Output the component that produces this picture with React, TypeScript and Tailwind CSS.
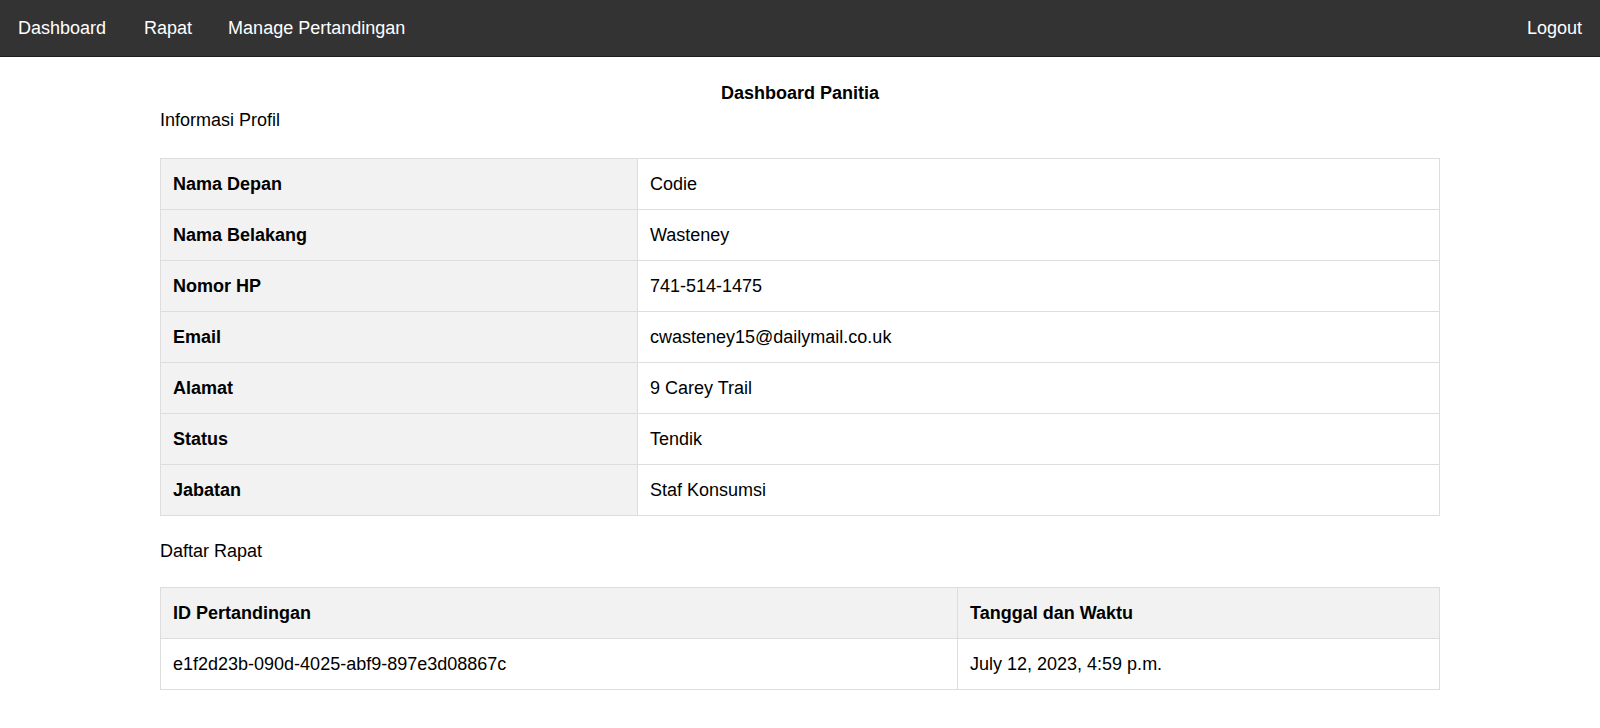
const profil = [
    ["Nama Depan", "Codie"],
    ["Nama Belakang", "Wasteney"],
    ["Nomor HP", "741-514-1475"],
    ["Email", "cwasteney15@dailymail.co.uk"],
    ["Alamat", "9 Carey Trail"],
    ["Status", "Tendik"],
    ["Jabatan", "Staf Konsumsi"],
];

const rapat = [
    { id: "e1f2d23b-090d-4025-abf9-897e3d08867c", waktu: "July 12, 2023, 4:59 p.m." },
];

const Navbar = () => {
    return (
        <nav className="flex h-[57px] items-center justify-between bg-[#333] border-b border-[#1c1c1c] text-white text-[18px]">
            <div className="flex">
                <a className="pl-[18px] pr-[19px] cursor-pointer">Dashboard</a>
                <a className="pl-[19px] pr-[18px] cursor-pointer">Rapat</a>
                <a className="px-[18px] cursor-pointer">Manage Pertandingan</a>
            </div>
            <a className="px-[18px] cursor-pointer">Logout</a>
        </nav>
    );
}

export default function App() {
    return (
        <div className="min-h-screen bg-white text-black text-[18px]" style={{ fontFamily: '"Liberation Sans", Arial, sans-serif' }}>
            <Navbar />

            <div className="mx-auto w-[1280px]">
                <h2 className="mt-[26px] text-center font-bold leading-[20px]">Dashboard Panitia</h2>
                <p className="mt-[7px] leading-[20px]">Informasi Profil</p>

                <table className="mt-[28px] w-full border-collapse">
                    <tbody>
                        {profil.map(([label, value]) => (
                            <tr key={label}>
                                <th className="w-[477px] border border-[#ddd] bg-[#f2f2f2] px-3 py-[15px] text-left font-bold leading-[20px]">{label}</th>
                                <td className="border border-[#ddd] px-3 py-[15px] leading-[20px]">{value}</td>
                            </tr>
                        ))}
                    </tbody>
                </table>

                <p className="mt-[25px] leading-[20px]">Daftar Rapat</p>

                <table className="mt-[26px] w-full border-collapse">
                    <thead>
                        <tr className="bg-[#f2f2f2]">
                            <th className="w-[797px] border border-[#ddd] px-3 py-[15px] text-left font-bold leading-[20px]">ID Pertandingan</th>
                            <th className="border border-[#ddd] px-3 py-[15px] text-left font-bold leading-[20px]">Tanggal dan Waktu</th>
                        </tr>
                    </thead>
                    <tbody>
                        {rapat.map((r) => (
                            <tr key={r.id}>
                                <td className="border border-[#ddd] px-3 py-[15px] leading-[20px]">{r.id}</td>
                                <td className="border border-[#ddd] px-3 py-[15px] leading-[20px]">{r.waktu}</td>
                            </tr>
                        ))}
                    </tbody>
                </table>
            </div>
        </div>
    );
}
